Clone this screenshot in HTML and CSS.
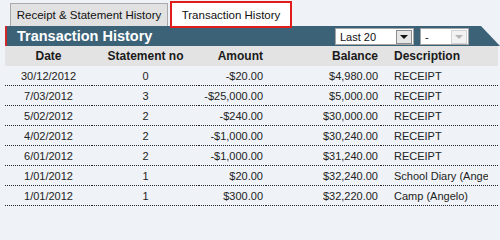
FILE: index.html
```html
<!DOCTYPE html>
<html>
<head>
<meta charset="utf-8">
<link rel="stylesheet" href="styles.css">
</head>
<body>
<div class="page">
  <div class="tabs">
    <div class="tab">Receipt &amp; Statement History</div>
    <div class="tab active">Transaction History</div>
  </div>
  <div class="bar">
    <div class="title">Transaction History</div>
    <div class="controls">
      <div class="sel sel-main">
        <span class="sel-text">Last 20</span>
        <span class="sel-btn"><span class="tri"></span></span>
      </div>
      <div class="sel sel-dis">
        <span class="sel-text">-</span>
        <span class="sel-btn"><span class="tri"></span></span>
      </div>
    </div>
  </div>
  <table class="grid">
    <colgroup>
      <col class="c-date"><col class="c-stmt"><col class="c-amt"><col class="c-bal"><col class="c-desc">
    </colgroup>
    <thead>
      <tr><th class="ctr">Date</th><th class="ctr">Statement no</th><th class="rt">Amount</th><th class="rt">Balance</th><th class="lt">Description</th></tr>
    </thead>
    <tbody>
      <tr><td class="ctr">30/12/2012</td><td class="ctr">0</td><td class="rt">-$20.00</td><td class="rt">$4,980.00</td><td class="lt"><div class="clip">RECEIPT</div></td></tr>
      <tr><td class="ctr">7/03/2012</td><td class="ctr">3</td><td class="rt">-$25,000.00</td><td class="rt">$5,000.00</td><td class="lt"><div class="clip">RECEIPT</div></td></tr>
      <tr><td class="ctr">5/02/2012</td><td class="ctr">2</td><td class="rt">-$240.00</td><td class="rt">$30,000.00</td><td class="lt"><div class="clip">RECEIPT</div></td></tr>
      <tr><td class="ctr">4/02/2012</td><td class="ctr">2</td><td class="rt">-$1,000.00</td><td class="rt">$30,240.00</td><td class="lt"><div class="clip">RECEIPT</div></td></tr>
      <tr><td class="ctr">6/01/2012</td><td class="ctr">2</td><td class="rt">-$1,000.00</td><td class="rt">$31,240.00</td><td class="lt"><div class="clip">RECEIPT</div></td></tr>
      <tr><td class="ctr">1/01/2012</td><td class="ctr">1</td><td class="rt">$20.00</td><td class="rt">$32,240.00</td><td class="lt"><div class="clip">School Diary (Angelo)</div></td></tr>
      <tr><td class="ctr">1/01/2012</td><td class="ctr">1</td><td class="rt">$300.00</td><td class="rt">$32,220.00</td><td class="lt"><div class="clip">Camp (Angelo)</div></td></tr>
    </tbody>
  </table>
</div>
</body>
</html>
```

FILE: styles.css
```css
html, body {
  margin: 0;
  padding: 0;
  background: #eff3f7;
}
body {
  font-family: "Liberation Sans", Arial, sans-serif;
  font-size: 11px;
  color: #222;
  width: 500px;
  height: 207px;
  overflow: hidden;
}
.page {
  padding: 1px 0 0 5px;
}
.tabs {
  display: flex;
  align-items: flex-end;
  height: 25px;
  padding-left: 5px;
  gap: 2px;
}
.tab {
  box-sizing: border-box;
  height: 23px;
  width: 158px;
  background: #e1e1e1;
  border: 1px solid #a9a9a9;
  border-bottom: none;
  display: flex;
  align-items: center;
  justify-content: center;
  font-size: 11.5px;
  color: #111;
}
.tab.active {
  width: 122px;
  height: 27px;
  background: #fff;
  border: 2px solid #e21b1b;
  margin-bottom: -2px;
  position: relative;
  z-index: 2;
}
.bar {
  height: 20px;
  background: #3c6277;
  border-left: 2px solid #cc2a2a;
  display: flex;
  align-items: center;
  justify-content: space-between;
  clip-path: polygon(0 0, calc(100% - 19px) 0, 100% 100%, 0 100%);
  padding-left: 10px;
}
.title {
  color: #fff;
  font-weight: bold;
  font-size: 14.5px;
  letter-spacing: 0;
}
.controls {
  display: flex;
  gap: 6px;
  margin-right: 31px;
  padding-top: 1px;
}
.sel {
  box-sizing: border-box;
  height: 17px;
  background: #fff;
  border: 1px solid #a5a5a5;
  display: flex;
  align-items: center;
  justify-content: space-between;
  padding: 0 1px 0 4px;
}
.sel-main { width: 79px; }
.sel-dis { width: 49px; }
.sel-text {
  font-size: 11px;
  color: #111;
}
.sel-btn {
  box-sizing: border-box;
  width: 16px;
  height: 14px;
  background: #e6e6e6;
  border: 1px solid #8c8c8c;
  display: flex;
  align-items: center;
  justify-content: center;
}
.tri {
  width: 0;
  height: 0;
  border-left: 4px solid transparent;
  border-right: 4px solid transparent;
  border-top: 4px solid #111;
  margin-top: 1px;
}
.sel-dis .sel-btn {
  background: #f2f2f2;
  border-color: #d2d2d2;
}
.sel-dis .tri { border-top-color: #b5b5b5; }
.grid {
  border-collapse: collapse;
  table-layout: fixed;
  width: 493px;
}
.c-date { width: 87px; }
.c-stmt { width: 107px; }
.c-amt { width: 67px; }
.c-bal { width: 115px; }
.c-desc { width: 117px; }
.grid th {
  background: #e3e3e3;
  height: 20px;
  padding: 0 3px;
  font-size: 12px;
  font-weight: bold;
  color: #1a1a1a;
}
.grid td {
  height: 19px;
  padding: 0 3px;
  border-bottom: 1px dotted #222;
  white-space: nowrap;
}
.grid th.lt, .grid td.lt { padding-left: 13px; }
.ctr { text-align: center; }
.rt { text-align: right; }
.lt { text-align: left; }
.clip {
  width: 94px;
  overflow: hidden;
  white-space: nowrap;
}
```
